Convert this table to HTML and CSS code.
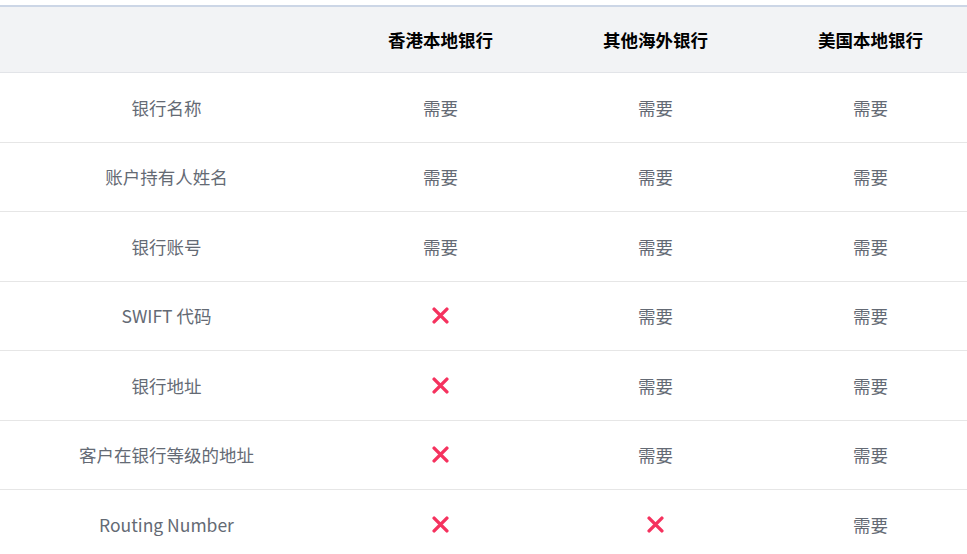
FILE: index.html
```html
<!DOCTYPE html>
<html lang="zh-CN">
<head>
<meta charset="utf-8">
<link rel="stylesheet" href="styles.css">
</head>
<body>
<div class="table">
  <div class="row head">
    <div class="cell"></div>
    <div class="cell">香港本地银行</div>
    <div class="cell">其他海外银行</div>
    <div class="cell">美国本地银行</div>
  </div>
  <div class="row">
    <div class="cell">银行名称</div>
    <div class="cell">需要</div>
    <div class="cell">需要</div>
    <div class="cell">需要</div>
  </div>
  <div class="row">
    <div class="cell">账户持有人姓名</div>
    <div class="cell">需要</div>
    <div class="cell">需要</div>
    <div class="cell">需要</div>
  </div>
  <div class="row">
    <div class="cell">银行账号</div>
    <div class="cell">需要</div>
    <div class="cell">需要</div>
    <div class="cell">需要</div>
  </div>
  <div class="row">
    <div class="cell">SWIFT 代码</div>
    <div class="cell"><svg class="no" viewBox="0 0 16 16"><path d="M2 2L14 14M14 2L2 14"/></svg></div>
    <div class="cell">需要</div>
    <div class="cell">需要</div>
  </div>
  <div class="row">
    <div class="cell">银行地址</div>
    <div class="cell"><svg class="no" viewBox="0 0 16 16"><path d="M2 2L14 14M14 2L2 14"/></svg></div>
    <div class="cell">需要</div>
    <div class="cell">需要</div>
  </div>
  <div class="row">
    <div class="cell">客户在银行等级的地址</div>
    <div class="cell"><svg class="no" viewBox="0 0 16 16"><path d="M2 2L14 14M14 2L2 14"/></svg></div>
    <div class="cell">需要</div>
    <div class="cell">需要</div>
  </div>
  <div class="row">
    <div class="cell">Routing Number</div>
    <div class="cell"><svg class="no" viewBox="0 0 16 16"><path d="M2 2L14 14M14 2L2 14"/></svg></div>
    <div class="cell"><svg class="no" viewBox="0 0 16 16"><path d="M2 2L14 14M14 2L2 14"/></svg></div>
    <div class="cell">需要</div>
  </div>
</div>
</body>
</html>
```
FILE: styles.css
```css
html, body {
  margin: 0;
  padding: 0;
  background: #fff;
  overflow: hidden;
}
body {
  padding-top: 5px;
  font-family: "Noto Sans CJK SC", "Noto Sans", sans-serif;
}
.table {
  width: 978px;
  border-top: 2px solid #ccd6e6;
}
.row {
  display: grid;
  grid-template-columns: 333px 215px 215px 215px;
  height: 69.5px;
  box-sizing: border-box;
  border-bottom: 1px solid #e6e6e6;
  color: #646a74;
  font-size: 17.5px;
}
.row.head {
  height: 66px;
  background: #f2f3f5;
  border-bottom-color: #e2e4e8;
  color: #000;
  font-weight: 700;
  font-size: 17.5px;
}
.cell {
  display: flex;
  align-items: center;
  justify-content: center;
}
.no {
  width: 17px;
  height: 17px;
  fill: none;
  stroke: #f5325e;
  stroke-width: 3.2;
  stroke-linecap: round;
}
```
